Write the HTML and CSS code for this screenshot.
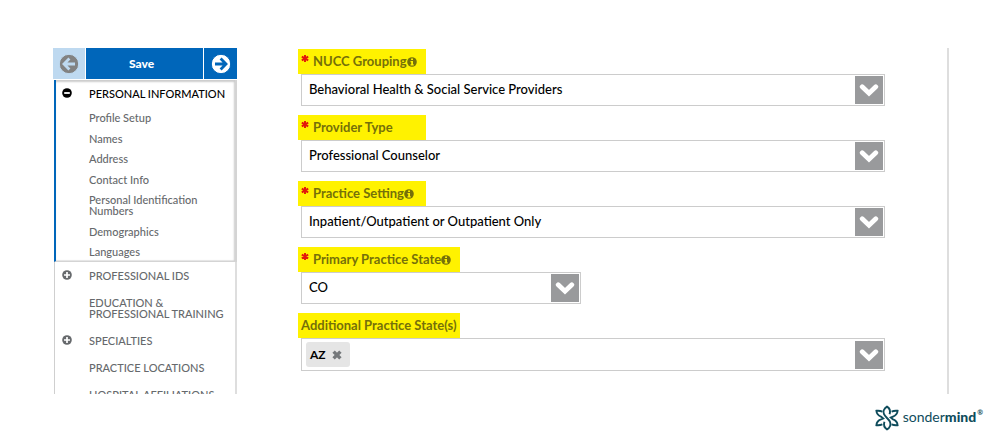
FILE: index.html
```html
<!DOCTYPE html>
<html lang="en">
<head>
<meta charset="utf-8">
<title>Profile – Personal Information</title>
<link rel="stylesheet" href="styles.css">
</head>
<body>
<svg class="defs" aria-hidden="true">
  <symbol id="arrow" viewBox="0 0 20 20"><circle cx="10" cy="10" r="9.7" fill="currentColor"/><path d="M4 10H15M9.6 4.6L15 10L9.6 15.4" fill="none" stroke-width="2.8"/></symbol>
  <symbol id="minus" viewBox="0 0 10 10"><circle cx="5" cy="5" r="4.8" fill="currentColor"/><path d="M2.2 5H7.8" stroke="#fff" stroke-width="1.8"/></symbol>
  <symbol id="plus" viewBox="0 0 10 10"><circle cx="5" cy="5" r="4.8" fill="currentColor"/><path d="M2 5H8M5 2V8" stroke="#fff" stroke-width="1.7"/></symbol>
  <symbol id="info" viewBox="0 0 10 10"><circle cx="5" cy="5" r="4.8" fill="currentColor"/><path d="M4.1 1.5H6V3H4.1zM3.5 4H6V7.3H6.7V8.5H3.5V7.3H4.2V5.2H3.5z" fill="#fff200"/></symbol>
  <symbol id="star" viewBox="0 0 10 10"><path d="M5 .5V9.5M1 2.7L9 7.3M1 7.3L9 2.7" stroke="#e2180c" stroke-width="2.4"/></symbol>
  <symbol id="chevron" viewBox="0 0 20 14"><path d="M3.2 3.8L10 10.2L16.8 3.8" fill="none" stroke="#fff" stroke-width="4.8" stroke-linecap="round"/></symbol>
</svg>
<main class="app">
  <nav class="sidebar" aria-label="Profile sections">
    <div class="toolbar">
      <button class="tool tool-back" type="button" aria-label="Back" disabled><svg class="arrow flip"><use href="#arrow"/></svg></button>
      <button class="tool tool-save" type="button">Save</button>
      <button class="tool" type="button" aria-label="Next"><svg class="arrow"><use href="#arrow"/></svg></button>
    </div>
    <section class="group">
      <a class="entry entry-active" href="#personal"><svg class="mark"><use href="#minus"/></svg><span>PERSONAL INFORMATION</span></a>
      <ul class="sublist">
        <li><a href="#setup">Profile Setup</a></li>
        <li><a href="#names">Names</a></li>
        <li><a href="#address">Address</a></li>
        <li><a href="#contact">Contact Info</a></li>
        <li><a href="#pin">Personal Identification Numbers</a></li>
        <li><a href="#demographics">Demographics</a></li>
        <li><a href="#languages">Languages</a></li>
      </ul>
    </section>
    <div class="sections">
      <a class="entry" href="#ids"><svg class="mark"><use href="#plus"/></svg><span>PROFESSIONAL IDS</span></a>
      <a class="entry" href="#education"><span>EDUCATION &amp; PROFESSIONAL TRAINING</span></a>
      <a class="entry" href="#specialties"><svg class="mark"><use href="#plus"/></svg><span>SPECIALTIES</span></a>
      <a class="entry" href="#locations"><span>PRACTICE LOCATIONS</span></a>
      <a class="entry" href="#hospital"><span>HOSPITAL AFFILIATIONS</span></a>
    </div>
  </nav>
  <form class="form">
    <div class="field">
      <label class="label" for="grouping"><svg class="star"><use href="#star"/></svg>NUCC Grouping<svg class="info"><use href="#info"/></svg></label>
      <div class="box"><select class="select" id="grouping"><option>Behavioral Health &amp; Social Service Providers</option></select><span class="drop"><svg class="chevron"><use href="#chevron"/></svg></span></div>
    </div>
    <div class="field">
      <label class="label" for="type"><svg class="star"><use href="#star"/></svg>Provider Type</label>
      <div class="box"><select class="select" id="type"><option>Professional Counselor</option></select><span class="drop"><svg class="chevron"><use href="#chevron"/></svg></span></div>
    </div>
    <div class="field">
      <label class="label" for="setting"><svg class="star"><use href="#star"/></svg>Practice Setting<svg class="info"><use href="#info"/></svg></label>
      <div class="box"><select class="select" id="setting"><option>Inpatient/Outpatient or Outpatient Only</option></select><span class="drop"><svg class="chevron"><use href="#chevron"/></svg></span></div>
    </div>
    <div class="field">
      <label class="label label-wide" for="state"><svg class="star"><use href="#star"/></svg>Primary Practice State<svg class="info"><use href="#info"/></svg></label>
      <div class="box box-short"><select class="select" id="state"><option>CO</option></select><span class="drop"><svg class="chevron"><use href="#chevron"/></svg></span></div>
    </div>
    <div class="field">
      <label class="label label-wide" for="more">Additional Practice State(s)</label>
      <div class="box box-tags">
        <span class="tag">AZ<button class="remove" type="button" aria-label="Remove AZ"><svg viewBox="0 0 10 10"><path d="M1.6 1.6L8.4 8.4M8.4 1.6L1.6 8.4" stroke="currentColor" stroke-width="3.4"/></svg></button></span>
        <button class="drop" id="more" type="button" aria-label="Show states"><svg class="chevron"><use href="#chevron"/></svg></button>
      </div>
    </div>
  </form>
</main>
<footer class="footer">
  <svg class="logo" viewBox="0 0 24 26" aria-hidden="true">
    <g fill="none" stroke="#0f4c5c" stroke-width="1.9">
      <path d="M14.6 9.2C15.6 5.8 14.4 3 12 1.6C9 3.4 7.8 6.6 9 9.2C10.2 11.8 13.8 14.2 15 16.8C16.2 19.4 15 22.8 12 24.4C9.6 23 8.4 20.2 9.4 16.8"/>
      <path d="M7.4 6.6C5.6 5.8 3.6 5.5 1.4 5.8C1.6 8.4 3.2 10.6 6 11.6L8.2 13.4L6 14.4C3.2 15.4 1.6 17.6 1.4 20.2C3.6 20.5 5.6 20.2 7.4 19.4"/>
      <path d="M16.6 6.6C18.4 5.8 20.4 5.5 22.6 5.8C22.4 8.4 20.8 10.6 18 11.6L15.8 12.6L18 14.4C20.8 15.4 22.4 17.6 22.6 20.2C20.4 20.5 18.4 20.2 16.6 19.4"/>
    </g>
  </svg>
  <span class="brand">sonder<b>mind</b></span><span class="reg">®</span>
</footer>
</body>
</html>
```
FILE: styles.css
```css
* { box-sizing: border-box; }
body {
  margin: 0;
  height: 100vh;
  display: flex;
  flex-direction: column;
  padding-top: 48px;
  overflow: hidden;
  background: #fff;
  color: #000;
  font-family: Lato, "Liberation Sans", sans-serif;
  font-size: 13px;
}
.defs { position: absolute; width: 0; height: 0; }
a { color: inherit; text-decoration: none; }
button { font: inherit; border: 0; padding: 0; }
.app {
  flex: 1;
  min-height: 0;
  display: flex;
  align-items: stretch;
  overflow: hidden;
  margin: 0 52px 0 53px;
  border-right: 2px solid #dedede;
}
.sidebar {
  flex: none;
  width: 184px;
  font-size: 11px;
  font-weight: 500;
  line-height: 11px;
  color: #66696c;
}
.toolbar { display: grid; grid-template-columns: 32px 1fr 33px; gap: 1px; height: 31px; }
.tool {
  display: flex;
  align-items: center;
  justify-content: center;
  background: #0066ba;
  color: #fff;
}
.tool-save { padding-right: 6px; font-size: 12px; font-weight: 900; }
.tool-back { background: #bed9f0; color: #828282; }
.arrow { width: 20px; height: 20px; stroke: #0066ba; }
.flip { transform: scaleX(-1); stroke: #bed9f0; }
.group {
  margin: 1px 0 0 1px;
  padding: 8px 0 4px 6px;
  border-left: 2px solid #0066ba;
  border-right: 2px solid #d4d4d4;
  border-bottom: 1px solid #d4d4d4;
  box-shadow: inset -1px 2px 2px #ccc, inset 0 -1px 1px #e4e4e4;
}
.entry { display: grid; grid-template-columns: 27px 1fr; }
.entry span { grid-column: 2; }
.entry-active { color: #000; white-space: nowrap; }
.mark { width: 10px; height: 10px; }
.sublist {
  display: flex;
  flex-direction: column;
  justify-content: space-between;
  height: 145px;
  margin: 13px 20px 0 27px;
  padding: 0;
  list-style: none;
}
.sections {
  display: flex;
  flex-direction: column;
  gap: 16px;
  margin-left: 1px;
  padding: 8px 0 8px 7px;
  border-left: 1px solid #cfcfcf;
  border-right: 2px solid #dedede;
}
.form {
  flex: 1;
  display: flex;
  flex-direction: column;
  gap: 9px;
  padding: 1px 62px 0 61px;
}
.label {
  display: flex;
  align-items: center;
  width: 128px;
  height: 25px;
  padding: 0 0 1px 3px;
  background: #fff200;
  color: #75700a;
  font-weight: 700;
  white-space: nowrap;
}
.label-wide { width: 162px; }
.star { width: 8px; height: 9px; margin: 0 4px 6px 0; }
.info { width: 10px; height: 10px; margin: 2px 0 0; }
.box {
  display: flex;
  align-items: center;
  height: 32px;
  margin-left: 3px;
  padding: 1px;
  border: 1px solid #ccc;
}
.box-short { width: 280px; }
.box-tags { height: 33px; padding-left: 4px; justify-content: space-between; }
.select {
  flex: 1;
  min-width: 0;
  height: 28px;
  padding: 0 6px 2px;
  border: 0;
  background: none;
  appearance: none;
  color: #000;
  font: inherit;
  font-weight: 500;
}
.drop {
  display: flex;
  align-items: center;
  justify-content: center;
  width: 28px;
  height: 28px;
  background: #999a9c;
  pointer-events: none;
}
.chevron { width: 20px; height: 14px; }
.tag {
  display: flex;
  align-items: center;
  gap: 6px;
  width: 44px;
  height: 25px;
  padding-left: 4px;
  border-radius: 3px;
  background: #e5e5e5;
  font-size: 12px;
  font-weight: 700;
}
.remove { display: flex; background: none; color: #75787b; }
.remove svg { width: 10px; height: 10px; }
.footer {
  display: flex;
  align-items: center;
  justify-content: flex-end;
  height: 48px;
  padding-right: 18px;
  color: #0f4c5c;
}
.logo { width: 24px; height: 26px; margin-right: 4px; }
.brand { font-size: 14px; padding-bottom: 3px; }
.brand b { font-weight: 900; }
.reg { font-size: 7px; font-weight: 700; margin: 0 0 12px 1px; }
```
